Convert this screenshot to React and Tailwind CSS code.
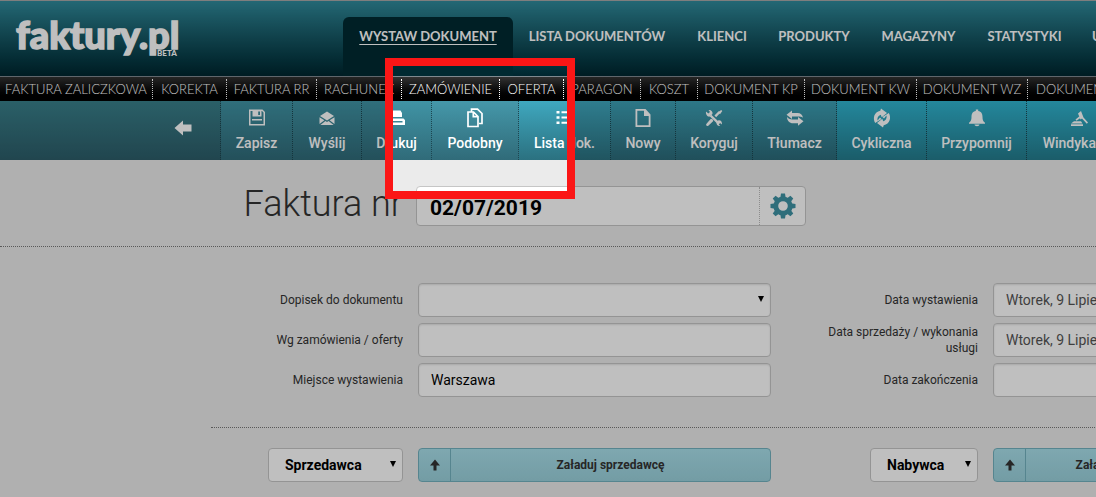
import React from "react";

const mainNav = [
  { label: "WYSTAW DOKUMENT", width: "w-[170px]", active: true },
  { label: "LISTA DOKUMENTÓW", width: "w-[168px]" },
  { label: "KLIENCI", width: "w-[82px]" },
  { label: "PRODUKTY", width: "w-[102px]" },
  { label: "MAGAZYNY", width: "w-[107px]" },
  { label: "STATYSTYKI", width: "w-[105px]" },
  { label: "USTAWIENIA", width: "w-[110px]" },
];

const subNav = [
  { label: "FAKTURA ZALICZKOWA", width: "w-[153px]" },
  { label: "KOREKTA", width: "w-[74px]" },
  { label: "FAKTURA RR", width: "w-[90px]" },
  { label: "RACHUNEK", width: "w-[85px]" },
  { label: "ZAMÓWIENIE", width: "w-[98px]" },
  { label: "OFERTA", width: "w-[64px]" },
  { label: "PARAGON", width: "w-[77px]" },
  { label: "KOSZT", width: "w-[57px]" },
  { label: "DOKUMENT KP", width: "w-[107px]" },
  { label: "DOKUMENT KW", width: "w-[112px]" },
  { label: "DOKUMENT WZ", width: "w-[111px]" },
  { label: "DOKUMENT PZ", width: "w-[110px]" },
];

function Icon({ children }) {
  return (
    <svg viewBox="0 0 20 20" className="h-5 w-5" fill="currentColor" aria-hidden="true">
      {children}
    </svg>
  );
}

const icons = {
  save: (
    <Icon>
      <path
        fillRule="evenodd"
        d="M2 1.500H15.500L18 4V17.500H2zM3.500 3V16H16.500V4.600L15 3H14.500V8.500H5.500V3zM11.200 3.500v3.500h1.800V3.500zM5 11h10v1.500H5z"
      />
    </Icon>
  ),
  mail: (
    <Icon>
      <path d="M10 3.500L17 8L10 12.500L3 8z" />
      <path d="M2.500 9.200L7.400 12.300L2.500 16zM17.500 9.200L12.600 12.300L17.500 16zM8.400 13L10 14L11.600 13L16.600 17H3.400z" />
    </Icon>
  ),
  print: (
    <Icon>
      <path d="M4.500 2.500H13.500L15 5V9H4.500z" />
      <path fillRule="evenodd" d="M2 10.500h14.500L18 12v5H2zM4 13v1.500h11.500V13z" />
    </Icon>
  ),
  copy: (
    <Icon>
      <path
        d="M6.500 3.500V1.200H12.500L17 5.500V15.500H14M3 4H8.500L13 8.500V18.500H3zM8.300 4.500V8.700H12.500"
        fill="none"
        stroke="currentColor"
        strokeWidth="1.700"
      />
    </Icon>
  ),
  list: (
    <Icon>
      <path d="M1.500 3h3v2.600h-3zM6.500 3.300H18v2H6.500zM1.500 8.200h3v2.600h-3zM6.500 8.500H18v2H6.500zM1.500 13.400h3V16h-3zM6.500 13.700H18v2H6.500z" />
    </Icon>
  ),
  file: (
    <Icon>
      <path
        fillRule="evenodd"
        d="M2.500 1H12.500L17.500 6.500V19H2.500zM4.300 2.700V17.300H15.700V8H11V2.700z"
      />
    </Icon>
  ),
  tools: (
    <Icon>
      <path
        d="M6.500 7.500L15 15.700M11.300 8.300L15.500 4M8.500 11.500L4.500 15.500"
        fill="none"
        stroke="currentColor"
        strokeWidth="2.400"
      />
      <path d="M2 3.500L4.300 5.400L6 4L4.500 2C7 1.600 9 3.500 8.500 6L5.800 8.600C3.500 9.200 1.500 6.500 2 3.500z" />
      <path d="M12.500 14.200L14.500 12.200C17 12 18.500 14 17.800 16.500L16 15L14.700 16.400L16.300 18C14 18.500 12.200 16.700 12.500 14.200z" />
      <path d="M14 4.200L17.200 2L18.300 3.100L16 6.200zM2.300 16L7 10.800L9.200 13L4.300 17.800C3 18.500 1.600 17.300 2.300 16z" />
    </Icon>
  ),
  swap: (
    <Icon>
      <path d="M1.500 6.800L7 2.500V5H12.500C15.500 5 17.500 6.800 18 9.800C16.500 8.800 15 8.600 13 8.600H7V11z" />
      <path d="M18.500 13.300L13 9.100V11.500H7.500C5 11.500 3 10.600 2 8.800C2 12.700 4.500 15.300 8 15.300H13V17.800z" />
    </Icon>
  ),
  cycle: (
    <Icon>
      <path d="M3.200 15C0.500 10.500 2 4 8.300 2.800L9 0.500L15 4.900L9.700 9.300L8.800 6.700C5.800 7.700 4.900 10.500 5.600 12.600L8 9.500L9.500 11z" />
      <path d="M16.800 5C19.500 9.500 18 16 11.700 17.200L11 19.500L5 15.100L10.300 10.700L11.200 13.300C14.200 12.300 15.100 9.500 14.400 7.400L12 10.500L10.500 9z" />
    </Icon>
  ),
  bell: (
    <Icon>
      <path d="M8.800 3V1.500h2.400V3C14.500 3.500 15.500 6 15.500 9C15.500 12 16.200 13.500 18 14.700V15.800H2V14.700C3.800 13.500 4.500 12 4.500 9C4.500 6 5.500 3.500 8.800 3zM7.500 16.500h5C12.300 18.700 7.700 18.700 7.500 16.500z" />
    </Icon>
  ),
  gavel: (
    <Icon>
      <path d="M9 5.500L12 3L14.500 9.500L11.500 11.500zM6.500 11.500L10.200 8.500L11 10.200L7.500 12.800zM13 10.500L14.500 9.500L19 14.500L17.800 15.700zM2 15.500L5 13.300H12L13.500 15.500zM2 16.300h12v1.700H2z" />
    </Icon>
  ),
};

const tools = [
  { label: "Zapisz", icon: "save", width: "w-[72px]", tone: "from-[#4094a5] to-[#306b79]" },
  { label: "Wyślij", icon: "mail", width: "w-[69px]", tone: "from-[#4094a5] to-[#306b79]" },
  { label: "Drukuj", icon: "print", width: "w-[70px]", tone: "from-[#4094a5] to-[#306b79]" },
  { label: "Podobny", icon: "copy", width: "w-[87px]", tone: "from-[#4598aa] to-[#306b79]" },
  { label: "Lista dok.", icon: "list", width: "w-[92px]", tone: "from-[#3fa8bf] to-[#2b7180]" },
  { label: "Nowy", icon: "file", width: "w-[65px]", tone: "from-[#3ca0b5] to-[#2b6a79]" },
  { label: "Koryguj", icon: "tools", width: "w-[77px]", tone: "from-[#3ca0b5] to-[#2b6a79]" },
  { label: "Tłumacz", icon: "swap", width: "w-[84px]", tone: "from-[#3ca0b5] to-[#2b6a79]" },
  { label: "Cykliczna", icon: "cycle", width: "w-[90px]", tone: "from-[#30b5d1] to-[#247c8d]" },
  { label: "Przypomnij", icon: "bell", width: "w-[100px]", tone: "from-[#30b5d1] to-[#247c8d]" },
  { label: "Windykacja", icon: "gavel", width: "w-[104px]", tone: "from-[#30b5d1] to-[#247c8d]" },
];

function Gear() {
  const teeth = [0, 45, 90, 135, 180, 225, 270, 315];
  return (
    <svg viewBox="0 0 26 26" className="h-[26px] w-[26px]" fill="#3f93a5" aria-hidden="true">
      {teeth.map((angle) => (
        <path key={angle} d="M10.300 5L11 0.500H15L15.700 5z" transform={`rotate(${angle} 13 13)`} />
      ))}
      <circle cx="13" cy="13" r="7.200" fill="none" stroke="#3f93a5" strokeWidth="4.800" />
    </svg>
  );
}

function Caret() {
  return (
    <svg
      viewBox="0 0 6 6"
      className="pointer-events-none absolute top-[13px] right-[7px] h-[6px] w-[6px]"
      aria-hidden="true"
    >
      <path d="M0 0H6L3 6z" fill="#000" />
    </svg>
  );
}

const fieldBox =
  "h-[34px] w-full rounded-[4px] border border-[#c6c6c6] bg-white px-3 text-[14px] shadow-[inset_0_1px_2px_rgba(0,0,0,0.12)]";

function Row({ id, label, children }) {
  return (
    <div className="grid grid-cols-[192px_1fr] items-center gap-[15px] pr-[15px]">
      <label htmlFor={id} className="pl-6 text-right text-[12px] leading-4">
        {label}
      </label>
      {children}
    </div>
  );
}

function Party({ id, name, action, selectWidth, buttonWidth }) {
  return (
    <div className="grid grid-cols-[192px_1fr] items-center gap-[15px] pr-[15px]">
      <div className="flex justify-end">
        <div className={`relative ${selectWidth}`}>
          <select
            id={id}
            aria-label={name}
            className="h-[34px] w-full appearance-none rounded-[4px] border border-[#c6c6c6] bg-white pl-4 text-[14px] font-bold text-black"
          >
            <option>{name}</option>
          </select>
          <Caret />
        </div>
      </div>
      <button
        type="button"
        className={`flex h-[34px] items-center rounded-[4px] border border-[#73b2bf] bg-linear-to-b from-[#a9e0eb] to-[#9ad1dc] text-[12px] font-bold ${buttonWidth}`}
      >
        <span className="flex h-full w-8 items-center justify-center border-r border-[#73b2bf]">
          <svg viewBox="0 0 10 12" className="h-3 w-[10px]" fill="#333" aria-hidden="true">
            <path d="M5 0.500L10 6.500H6.500V11.500H3.500V6.500H0z" />
          </svg>
        </span>
        <span className="flex-1">{action}</span>
      </button>
    </div>
  );
}

export default function App() {
  return (
    <div className="relative min-h-screen overflow-hidden bg-[#ebebeb] font-['Roboto','Liberation_Sans',sans-serif] text-[#333]">
      <header className="flex h-[77px] items-end border-t border-b border-t-[#a8a8a8] border-b-[#7f8990] bg-linear-to-b from-[#308b9c] to-[#00262f] font-['Lato','Liberation_Sans',sans-serif]">
        <a href="#" className="relative h-full w-[343px] shrink-0 pt-[13px] pl-4 text-white">
          <span className="block text-[38px] leading-10 font-black [-webkit-text-stroke:1.5px_white]">faktury.pl</span>
          <span className="absolute top-[48px] left-[157px] text-[8px] leading-[8px] font-black">BETA</span>
        </a>
        <nav className="flex">
          {mainNav.map((item) => (
            <a
              key={item.label}
              href="#"
              className={`flex h-[59px] shrink-0 justify-center rounded-t-md pt-[9px] text-[13px] leading-5 font-bold whitespace-nowrap text-white ${item.width} ${
                item.active ? "bg-[#002a32] underline underline-offset-3" : ""
              }`}
            >
              {item.label}
            </a>
          ))}
        </nav>
      </header>

      <nav className="flex h-6 items-center bg-linear-to-b from-[#333] to-black font-['Lato','Liberation_Sans',sans-serif]">
        {subNav.map((item) => (
          <a
            key={item.label}
            href="#"
            className={`flex h-5 shrink-0 items-center justify-center border-r border-dotted border-white pt-px text-[13px] font-light whitespace-nowrap text-white ${item.width}`}
          >
            {item.label}
          </a>
        ))}
      </nav>

      <div className="flex h-[59px] bg-linear-to-b from-[#39808b] to-[#2c5d69]">
        <div className="flex w-[221px] shrink-0 items-center justify-end border-r border-dotted border-[#1d4651] pr-7 pb-[6px]">
          <button type="button" aria-label="Wstecz" className="text-white">
            <svg viewBox="0 0 18 16" className="h-4 w-[18px]" fill="currentColor" aria-hidden="true">
              <path d="M0.500 8L9 0.500V4.500H17.500V11.500H9V15.500z" />
            </svg>
          </button>
        </div>
        {tools.map((tool) => (
          <button
            key={tool.label}
            type="button"
            className={`flex shrink-0 flex-col items-center gap-1 border-r border-dotted border-[#1d4651] bg-linear-to-b pt-[7px] text-[14px] leading-[22px] font-medium whitespace-nowrap text-white ${tool.width} ${tool.tone}`}
          >
            {icons[tool.icon]}
            {tool.label}
          </button>
        ))}
      </div>

      <main>
        <div className="border-b border-dotted border-[#777] pt-[26px] pb-5">
          <div className="ml-[211px] flex gap-[13px]">
            <label htmlFor="number" className="w-[192px] text-right text-[36px] leading-9 font-light whitespace-nowrap">
              Faktura nr
            </label>
            <div className="flex h-10 w-[390px] rounded-[4px] border border-[#c6c6c6] bg-white">
              <input
                id="number"
                defaultValue="02/07/2019"
                className="min-w-0 flex-1 bg-transparent px-[13px] pt-[6px] text-[21px] font-bold text-black"
              />
              <button
                type="button"
                aria-label="Ustawienia numeracji"
                className="flex w-[46px] items-center justify-center border-l border-dotted border-[#bbb]"
              >
                <Gear />
              </button>
            </div>
          </div>
        </div>

        <div className="ml-[211px] min-w-[1150px]">
          <div className="grid grid-cols-2 border-b border-dotted border-[#777] pt-9 pb-[30px]">
            <div className="flex flex-col gap-[6px]">
              <Row id="note" label="Dopisek do dokumentu">
                <div className="relative">
                  <select id="note" className={`${fieldBox} appearance-none`} defaultValue="">
                    <option value=""></option>
                  </select>
                  <Caret />
                </div>
              </Row>
              <Row id="order" label="Wg zamówienia / oferty">
                <input id="order" className={fieldBox} />
              </Row>
              <Row id="place" label="Miejsce wystawienia">
                <input id="place" defaultValue="Warszawa" className={`${fieldBox} text-black`} />
              </Row>
            </div>
            <div className="flex flex-col gap-[6px]">
              <Row id="issued" label="Data wystawienia">
                <input id="issued" defaultValue="Wtorek, 9 Lipiec 2019" className={`${fieldBox} text-[#555]`} />
              </Row>
              <Row id="sold" label="Data sprzedaży / wykonania usługi">
                <input id="sold" defaultValue="Wtorek, 9 Lipiec 2019" className={`${fieldBox} text-[#555]`} />
              </Row>
              <Row id="ended" label="Data zakończenia">
                <input id="ended" className={fieldBox} />
              </Row>
            </div>
          </div>
          <div className="grid grid-cols-2 pt-5">
            <Party
              id="seller"
              name="Sprzedawca"
              action="Załaduj sprzedawcę"
              selectWidth="w-[135px]"
              buttonWidth="w-full"
            />
            <Party
              id="buyer"
              name="Nabywca"
              action="Załaduj nabywcę"
              selectWidth="w-[108px]"
              buttonWidth="w-[224px]"
            />
          </div>
        </div>
      </main>

      <div className="pointer-events-none absolute top-[58px] left-[385px] h-[141px] w-[190px] border-8 border-[#fb1616] shadow-[0_0_0_4000px_rgba(0,0,0,0.25)]" />
    </div>
  );
}
